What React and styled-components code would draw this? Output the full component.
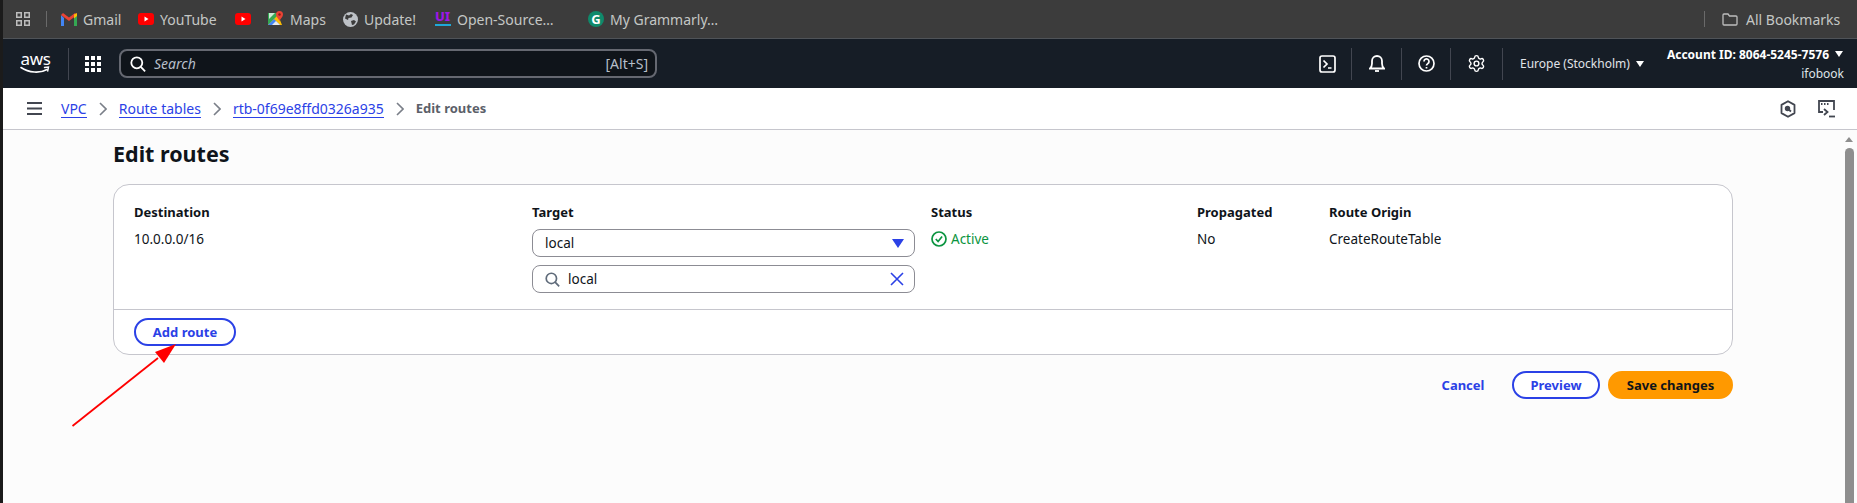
import React from 'react'
import styled, { createGlobalStyle } from 'styled-components'
import { Settings } from 'lucide-react'

const GlobalStyle = createGlobalStyle`
  html, body {
    margin: 0;
    padding: 0;
    height: 100%;
    overflow: hidden;
    background: #fcfcfc;
    font-family: "Noto Sans", "Open Sans", sans-serif;
  }
`

const bookmarks = [
  { name: 'Gmail', width: 77, icon: <GmailIcon /> },
  { name: 'YouTube', width: 97, icon: <YoutubeIcon /> },
  { name: '', width: 33, icon: <YoutubeIcon /> },
  { name: 'Maps', width: 75, icon: <MapsIcon /> },
  { name: 'Update!', width: 92, icon: <GlobeIcon /> },
  { name: 'Open-Source…', width: 153, icon: <UiIcon /> },
  { name: 'My Grammarly…', width: 130, icon: <GrammarlyIcon /> },
]

function GmailIcon() {
  return (
    <svg width="16" height="13" viewBox="0 0 16 13">
      <path d="M0 2v11h3V5z" fill="#4285f4" />
      <path d="M16 2v11h-3V5z" fill="#34a853" />
      <path d="M0 2l8 6 8-6-2-2-6 4.500L2 0z" fill="#ea4335" />
      <path d="M13 1.500L16 0v3l-3 2.500z" fill="#fbbc04" />
    </svg>
  )
}

function YoutubeIcon() {
  return (
    <svg width="16" height="12" viewBox="0 0 16 12">
      <rect width="16" height="12" rx="3" fill="#f00" />
      <path d="M6.500 3.500v5L10.500 6z" fill="#fff" />
    </svg>
  )
}

function MapsIcon() {
  return (
    <svg width="16" height="16" viewBox="0 0 16 16">
      <path d="M0 2h10v12H0z" fill="#34a853" />
      <path d="M0 14L10 4l4 10z" fill="#fbbc04" />
      <path d="M0 14l6-6 6 6z" fill="#4285f4" />
      <path d="M4 14l4-4 4 4z" fill="#e8eaed" />
      <path d="M1 2h6L1 8z" fill="#fff" opacity=".75" />
      <path d="M11.500 0a3.500 3.500 0 0 1 3.500 3.500C15 6 12.500 7.500 11.500 10 10.500 7.500 8 6 8 3.500A3.500 3.500 0 0 1 11.500 0z" fill="#ea4335" />
      <circle cx="11.500" cy="3.500" r="1.200" fill="#8c1c13" />
    </svg>
  )
}

function GlobeIcon() {
  return (
    <svg width="15" height="15" viewBox="0 0 15 15">
      <circle cx="7.500" cy="7.500" r="7.500" fill="#bdc1c6" />
      <path d="M3 2.500l3 1 2-1.500 2 1-1.500 2.500-3 .5L5 8 2 6.500zM8 9l3-1 2 1.500-2 3-2 .5z" fill="#3c3c3c" />
    </svg>
  )
}

function UiIcon() {
  return (
    <svg width="16" height="18" viewBox="0 0 16 18">
      <text x="0" y="11" fontFamily="Noto Sans, sans-serif" fontWeight="800" fontSize="13" fill="#9d17e8">UI</text>
      <rect y="14" width="16" height="2" fill="#1fa8d8" />
    </svg>
  )
}

function GrammarlyIcon() {
  return (
    <svg width="16" height="16" viewBox="0 0 16 16">
      <circle cx="8" cy="8" r="8" fill="#0f8a6b" />
      <text x="8" y="12.500" textAnchor="middle" fontFamily="Noto Sans, sans-serif" fontWeight="700" fontSize="13" fill="#fff">G</text>
    </svg>
  )
}

const Grid2x2 = () => (
  <svg width="14" height="14" viewBox="0 0 14 14" fill="none" stroke="#bdbdbd" strokeWidth="1.500">
    <rect x=".75" y=".75" width="4.500" height="4.500" />
    <rect x="8.750" y=".75" width="4.500" height="4.500" />
    <rect x=".75" y="8.750" width="4.500" height="4.500" />
    <rect x="8.750" y="8.750" width="4.500" height="4.500" />
  </svg>
)

const FolderIcon = () => (
  <svg width="16" height="13" viewBox="0 0 16 13" fill="none" stroke="#bdbdbd" strokeWidth="1.300">
    <path d="M1 2a1 1 0 0 1 1-1h4l1.500 2H14a1 1 0 0 1 1 1v7a1 1 0 0 1-1 1H2a1 1 0 0 1-1-1z" />
  </svg>
)

const AppsIcon = () => (
  <svg width="16" height="16" viewBox="0 0 16 16" fill="#fff">
    {[0, 6, 12].map(y => [0, 6, 12].map(x => (
      <rect key={`${x}-${y}`} x={x} y={y} width="4" height="4" />
    )))}
  </svg>
)

const SearchGlass = ({ color = '#fff', size = 16 }) => (
  <svg width={size} height={size} viewBox="0 0 16 16" fill="none" stroke={color} strokeWidth="1.800">
    <circle cx="6.800" cy="6.800" r="5.500" />
    <path d="M10.800 10.800l4.300 4.500" />
  </svg>
)

const TerminalIcon = () => (
  <svg width="17" height="18" viewBox="0 0 17 18" fill="none" stroke="#fff" strokeWidth="1.700">
    <rect x="1" y="1" width="15" height="16" rx="2" />
    <path d="M4.500 5.500l3.500 3.500-3.500 3.500M9 13h3.500" />
  </svg>
)

const BellIcon = () => (
  <svg width="16" height="18" viewBox="0 0 16 18" fill="none" stroke="#fff" strokeWidth="1.800">
    <path d="M1 13.500h14c-1.500-1.500-2-2.500-2-5V6A5 5 0 0 0 3 6v2.500c0 2.500-.5 3.500-2 5z" />
    <path d="M6 16h4" />
  </svg>
)

const HelpIcon = () => (
  <svg width="17" height="17" viewBox="0 0 17 17" fill="none" stroke="#fff" strokeWidth="1.700">
    <circle cx="8.500" cy="8.500" r="7.500" />
    <path d="M6 6.500a2.500 2.500 0 1 1 3.800 2.100c-.9.600-1.300 1-1.300 2" />
    <path d="M8.500 12v1.500" />
  </svg>
)

const AwsSmile = () => (
  <svg width="31" height="9" viewBox="0 0 31 9" fill="none">
    <path d="M1 1.500C9 7 20 7.500 27 3.500" stroke="#fff" strokeWidth="1.600" strokeLinecap="round" />
    <path d="M24.500 1.500l4-.5-.8 4" stroke="#fff" strokeWidth="1.400" strokeLinecap="round" />
  </svg>
)

const MenuIcon = () => (
  <svg width="15" height="13" viewBox="0 0 15 13" fill="#424650">
    <rect width="15" height="2" />
    <rect y="5.500" width="15" height="2" />
    <rect y="11" width="15" height="2" />
  </svg>
)

const Chevron = () => (
  <svg width="8" height="14" viewBox="0 0 8 14" fill="none" stroke="#7a7f88" strokeWidth="1.600">
    <path d="M1 1l6 6-6 6" />
  </svg>
)

const HexIcon = () => (
  <svg width="16" height="18" viewBox="0 0 16 18" fill="none" stroke="#424650" strokeWidth="1.800">
    <path d="M8 1.200l6.500 3.700v8.200L8 16.800l-6.500-3.700V4.900z" strokeLinejoin="round" />
    <circle cx="7.500" cy="8.500" r="1.800" fill="#424650" />
    <path d="M8 9l3 2.500" />
  </svg>
)

const CloudShellIcon = () => (
  <svg width="17" height="18" viewBox="0 0 17 18" fill="none" stroke="#424650" strokeWidth="1.800">
    <path d="M5 12H1V1h15v9" />
    <path d="M3 4h1.500M6 4h1.500M9 4h1.500" />
    <path d="M6 9l3.500 3L6 15" />
    <path d="M11 16.500h6" />
  </svg>
)

const ActiveIcon = () => (
  <svg width="16" height="16" viewBox="0 0 16 16" fill="none" stroke="#0b9440" strokeWidth="1.700">
    <circle cx="8" cy="8" r="7" />
    <path d="M4.800 8l2.300 2.500 4-5" />
  </svg>
)

const ClearIcon = () => (
  <svg width="14" height="14" viewBox="0 0 14 14" fill="none" stroke="#2b41e6" strokeWidth="1.600">
    <path d="M1 1l12 12M13 1L1 13" />
  </svg>
)

const Page = styled.div`
  position: relative;
  display: flex;
  width: 100%;
  height: 100vh;
  overflow: hidden;
  background: #fcfcfc;
`

const EdgeStrip = styled.div`
  flex: 0 0 3px;
  background: #1b1b1b;
`

const Body = styled.div`
  flex: 1;
  min-width: 0;
  display: flex;
  flex-direction: column;
`

const BookmarkBar = styled.div`
  height: 38px;
  flex: 0 0 38px;
  display: flex;
  align-items: center;
  padding: 0 15px 0 13px;
  background: #3c3c3c;
  color: #c4c7c5;
  font-size: 14px;
`

const BarDivider = styled.span`
  width: 1px;
  height: 16px;
  background: #6a6a6a;
  margin: 0 ${p => p.$right}px 0 ${p => p.$left}px;
`

const Bookmark = styled.div`
  flex: 0 0 ${p => p.$width}px;
  display: flex;
  align-items: center;
  gap: ${p => p.$gap || 6}px;
  white-space: nowrap;
`

const Spacer = styled.div`
  flex: 1;
`

const TopNav = styled.div`
  flex: 0 0 50px;
  display: flex;
  align-items: center;
  padding: 0 13px 0 17px;
  background: #161d26;
  border-top: 1px solid #4f5358;
  box-sizing: border-box;
  color: #fff;
`

const AwsLogo = styled.div`
  width: 31px;
  display: flex;
  flex-direction: column;
  align-items: center;
  font-size: 17px;
  line-height: 14px;
  letter-spacing: -0.3px;
`

const NavDivider = styled.span`
  flex: 0 0 1px;
  height: 32px;
  background: #424650;
  margin: ${p => p.$margin || '0 16px'};
`

const AppsSlot = styled.div`
  flex: 0 0 17px;
  display: flex;
  justify-content: center;
  margin-left: 15px;
`

const SearchBox = styled.div`
  width: 538px;
  height: 29px;
  box-sizing: border-box;
  margin-left: 18px;
  display: flex;
  align-items: center;
  gap: 8px;
  padding: 0 7px 0 9px;
  background: #0f141a;
  border: 2px solid #656871;
  border-radius: 8px;
  color: #b6bec9;
  font-size: 14px;
`

const SearchHint = styled.span`
  font-style: italic;
  flex: 1;
`

const NavIconSlot = styled.div`
  flex: 0 0 17px;
  display: flex;
  justify-content: center;
`

const RegionMenu = styled.div`
  margin-left: 17px;
  width: 147px;
  display: flex;
  align-items: center;
  gap: 6px;
  color: #e0e3e8;
  font-size: 12px;
  white-space: nowrap;
`

const Caret = styled.span`
  width: 0;
  height: 0;
  border-left: ${p => p.$size || 4}px solid transparent;
  border-right: ${p => p.$size || 4}px solid transparent;
  border-top: ${p => (p.$size || 4) * 1.6}px solid ${p => p.$color || '#fff'};
`

const AccountMenu = styled.div`
  width: 177px;
  display: flex;
  flex-direction: column;
  align-items: flex-end;
  gap: 4px;
  font-size: 12px;
  line-height: 15px;
`

const AccountId = styled.div`
  display: flex;
  align-items: center;
  gap: 6px;
  font-weight: 700;
  margin-right: 1px;
  white-space: nowrap;
`

const AccountName = styled.div`
  color: #dfe3e8;
`

const CrumbBar = styled.div`
  flex: 0 0 42px;
  box-sizing: border-box;
  display: flex;
  align-items: center;
  padding: 0 22px 0 24px;
  background: #fff;
  border-bottom: 1px solid #c6c6cd;
  font-size: 14px;
`

const Crumbs = styled.nav`
  display: flex;
  align-items: center;
  margin-left: 19px;
  gap: 12px;
`

const CrumbLink = styled.a`
  color: #2b41e6;
  border-bottom: 1px solid #2b41e6;
  line-height: 17px;
  white-space: nowrap;
`

const CrumbCurrent = styled.span`
  color: #5b6069;
  font-size: 13px;
  font-weight: 700;
  line-height: 17px;
`

const CrumbTools = styled.div`
  display: flex;
  align-items: center;
  gap: 22px;
`

const Main = styled.div`
  flex: 1;
  min-height: 0;
  display: flex;
`

const Content = styled.main`
  flex: 1;
  min-width: 0;
  padding: 10px 112px 0 110px;
`

const Title = styled.h1`
  margin: 0 0 16px;
  font-size: 21.5px;
  line-height: 28px;
  font-weight: 700;
  color: #0f141a;
`

const Card = styled.section`
  height: 171px;
  box-sizing: border-box;
  display: flex;
  flex-direction: column;
  background: #fff;
  border: 1px solid #c6c6cd;
  border-radius: 16px;
`

const RouteGrid = styled.div`
  flex: 0 0 125px;
  box-sizing: border-box;
  display: grid;
  grid-template-columns: 398px 399px 266px 132px 1fr;
  grid-template-rows: 20px 1fr;
  row-gap: 7px;
  padding: 17px 20px 0;
  border-bottom: 1px solid #c6c6cd;
  font-size: 13.5px;
  color: #0f141a;
`

const ColumnHead = styled.div`
  font-size: 13px;
  font-weight: 700;
  line-height: 20px;
`

const Cell = styled.div`
  line-height: 20px;
`

const TargetCell = styled.div`
  width: 383px;
  display: flex;
  flex-direction: column;
  gap: 8px;
`

const Field = styled.div`
  height: 28px;
  box-sizing: border-box;
  display: flex;
  align-items: center;
  justify-content: space-between;
  gap: 8px;
  padding: 0 10px 0 12px;
  background: #fff;
  border: 1px solid #8c8c94;
  border-radius: 8px;
`

const FieldText = styled.span`
  flex: 1;
`

const StatusCell = styled.div`
  align-self: start;
  display: flex;
  align-items: center;
  gap: 4px;
  line-height: 20px;
  color: #0b9440;
`

const CardFooter = styled.div`
  flex: 1;
  display: flex;
  align-items: center;
  padding-left: 20px;
`

const Button = styled.button`
  height: 28px;
  box-sizing: border-box;
  padding: 0;
  width: ${p => p.$width}px;
  font-family: inherit;
  font-size: 13px;
  font-weight: 700;
  border-radius: 20px;
  border: 2px solid ${p => (p.$variant === 'primary' ? '#ff9900' : p.$variant === 'link' ? 'transparent' : '#2b41e6')};
  background: ${p => (p.$variant === 'primary' ? '#ff9900' : p.$variant === 'link' ? 'transparent' : '#fff')};
  color: ${p => (p.$variant === 'primary' ? '#0f141a' : '#2b41e6')};
`

const Actions = styled.div`
  display: flex;
  justify-content: flex-end;
  gap: 8px;
  margin-top: 16px;
`

const CancelButton = styled(Button)`
  margin-right: 14px;
`

const ScrollTrack = styled.div`
  flex: 0 0 12px;
  display: flex;
  flex-direction: column;
  padding-top: 7px;
  background: #fcfcfc;
`

const ScrollArrow = styled.div`
  width: 0;
  height: 0;
  border-left: 4.500px solid transparent;
  border-right: 4.500px solid transparent;
  border-bottom: 5px solid #8e8e8e;
`

const ScrollThumb = styled.div`
  width: 9px;
  flex: 1;
  margin-top: 6px;
  background: #8e8e8e;
  border-radius: 5px 5px 0 0;
`

const ArrowOverlay = styled.svg`
  position: absolute;
  left: 66px;
  top: 340px;
  pointer-events: none;
`

export default function App() {
  return (
    <>
      <GlobalStyle />
      <Page>
        <EdgeStrip />
        <Body>
          <BookmarkBar>
            <Grid2x2 />
            <BarDivider $left={16} $right={14} />
            {bookmarks.map((b, i) => (
              <Bookmark key={i} $width={b.width}>
                {b.icon}
                {b.name && <span>{b.name}</span>}
              </Bookmark>
            ))}
            <Spacer />
            <BarDivider $left={0} $right={17} />
            <Bookmark $width={120} $gap={8}>
              <FolderIcon />
              <span>All Bookmarks</span>
            </Bookmark>
          </BookmarkBar>

          <TopNav>
            <AwsLogo>
              aws
              <AwsSmile />
            </AwsLogo>
            <NavDivider $margin="0 0 0 17px" />
            <AppsSlot>
              <AppsIcon />
            </AppsSlot>
            <SearchBox>
              <SearchGlass />
              <SearchHint>Search</SearchHint>
              <span>[Alt+S]</span>
            </SearchBox>
            <Spacer />
            <NavIconSlot><TerminalIcon /></NavIconSlot>
            <NavDivider $margin="0 16px 0 15px" />
            <NavIconSlot><BellIcon /></NavIconSlot>
            <NavDivider />
            <NavIconSlot><HelpIcon /></NavIconSlot>
            <NavDivider $margin="0 16px 0 15px" />
            <NavIconSlot><Settings size={19} strokeWidth={1.800} color="#fff" /></NavIconSlot>
            <NavDivider $margin="0 0 0 16px" />
            <RegionMenu>
              <span>Europe (Stockholm)</span>
              <Caret />
            </RegionMenu>
            <AccountMenu>
              <AccountId>
                <span>Account ID: 8064-5245-7576</span>
                <Caret />
              </AccountId>
              <AccountName>ifobook</AccountName>
            </AccountMenu>
          </TopNav>

          <CrumbBar>
            <MenuIcon />
            <Crumbs>
              <CrumbLink>VPC</CrumbLink>
              <Chevron />
              <CrumbLink>Route tables</CrumbLink>
              <Chevron />
              <CrumbLink>rtb-0f69e8ffd0326a935</CrumbLink>
              <Chevron />
              <CrumbCurrent>Edit routes</CrumbCurrent>
            </Crumbs>
            <Spacer />
            <CrumbTools>
              <HexIcon />
              <CloudShellIcon />
            </CrumbTools>
          </CrumbBar>

          <Main>
            <Content>
              <Title>Edit routes</Title>
              <Card>
                <RouteGrid>
                  <ColumnHead>Destination</ColumnHead>
                  <ColumnHead>Target</ColumnHead>
                  <ColumnHead>Status</ColumnHead>
                  <ColumnHead>Propagated</ColumnHead>
                  <ColumnHead>Route Origin</ColumnHead>
                  <Cell>10.0.0.0/16</Cell>
                  <TargetCell>
                    <Field>
                      <FieldText>local</FieldText>
                      <Caret $color="#2b41e6" $size={6} />
                    </Field>
                    <Field>
                      <SearchGlass color="#5f6b7a" size={15} />
                      <FieldText>local</FieldText>
                      <ClearIcon />
                    </Field>
                  </TargetCell>
                  <StatusCell>
                    <ActiveIcon />
                    Active
                  </StatusCell>
                  <Cell>No</Cell>
                  <Cell>CreateRouteTable</Cell>
                </RouteGrid>
                <CardFooter>
                  <Button $width={102}>Add route</Button>
                </CardFooter>
              </Card>
              <Actions>
                <CancelButton $variant="link" $width={54}>Cancel</CancelButton>
                <Button $width={88}>Preview</Button>
                <Button $variant="primary" $width={125}>Save changes</Button>
              </Actions>
            </Content>
            <ScrollTrack>
              <ScrollArrow />
              <ScrollThumb />
            </ScrollTrack>
          </Main>
        </Body>
        <ArrowOverlay width="114" height="90" viewBox="0 0 114 90">
          <path d="M6.500 86L92 18" stroke="#f00" strokeWidth="1.800" />
          <path d="M110 4L89 12l9 11z" fill="#f00" />
        </ArrowOverlay>
      </Page>
    </>
  )
}
